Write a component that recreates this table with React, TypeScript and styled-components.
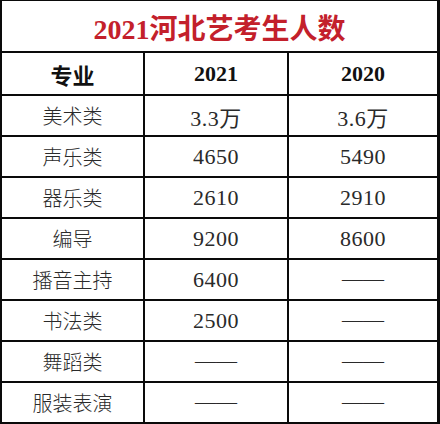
import * as React from 'react';
import styled, { createGlobalStyle } from 'styled-components';

const GlobalStyle = createGlobalStyle`
  html, body {
    margin: 0;
    padding: 0;
    background: #fff;
  }
`;

interface Row {
  name: string;
  y2021: string;
  y2020: string;
}

const rows: Row[] = [
  { name: '美术类', y2021: '3.3万', y2020: '3.6万' },
  { name: '声乐类', y2021: '4650', y2020: '5490' },
  { name: '器乐类', y2021: '2610', y2020: '2910' },
  { name: '编导', y2021: '9200', y2020: '8600' },
  { name: '播音主持', y2021: '6400', y2020: '——' },
  { name: '书法类', y2021: '2500', y2020: '——' },
  { name: '舞蹈类', y2021: '——', y2020: '——' },
  { name: '服装表演', y2021: '——', y2020: '——' },
];

const App: React.FunctionComponent = () => (
  <>
    <GlobalStyle />
    <Grid>
      <Title>2021河北艺考生人数</Title>
      <HeadCell>专业</HeadCell>
      <HeadCell>2021</HeadCell>
      <HeadCell>2020</HeadCell>
      {rows.map((r) => (
        <React.Fragment key={r.name}>
          <NameCell>{r.name}</NameCell>
          <ValueCell $dash={r.y2021 === '——'}>{r.y2021}</ValueCell>
          <ValueCell $dash={r.y2020 === '——'}>{r.y2020}</ValueCell>
        </React.Fragment>
      ))}
    </Grid>
  </>
);

export default App;

const Grid = styled.div`
  width: 440px;
  height: 424px;
  box-sizing: border-box;
  display: grid;
  grid-template-columns: 141px 142px 148px;
  grid-template-rows: 50px 41px repeat(8, 39px);
  gap: 2px;
  padding: 1px 3px 2px 2px;
  background: #0a0a0a;
`;

const Cell = styled.div`
  background: #fff;
  display: flex;
  align-items: center;
  justify-content: center;
  color: #1e1e1e;
  white-space: nowrap;
`;

const Title = styled(Cell)`
  grid-column: 1 / -1;
  color: #c3202b;
  font-family: 'Liberation Serif', 'Noto Sans CJK SC', serif;
  font-weight: 700;
  font-size: 28px;
  padding-top: 2px;
`;

const HeadCell = styled(Cell)`
  font-family: 'Liberation Serif', 'Noto Sans CJK SC', serif;
  font-weight: 700;
  font-size: 22px;
  color: #111;
`;

const NameCell = styled(Cell)`
  font-family: 'Noto Sans CJK SC', sans-serif;
  font-weight: 300;
  font-size: 20px;
  color: #2a2a2a;
`;

const ValueCell = styled(Cell)<{ $dash?: boolean }>`
  font-family: 'Liberation Serif', 'Noto Sans CJK SC', serif;
  font-size: ${(p) => (p.$dash ? '21px' : '22px')};
  font-weight: 400;
  letter-spacing: ${(p) => (p.$dash ? '0' : '0.5px')};
  color: #2a2a2a;
`;
